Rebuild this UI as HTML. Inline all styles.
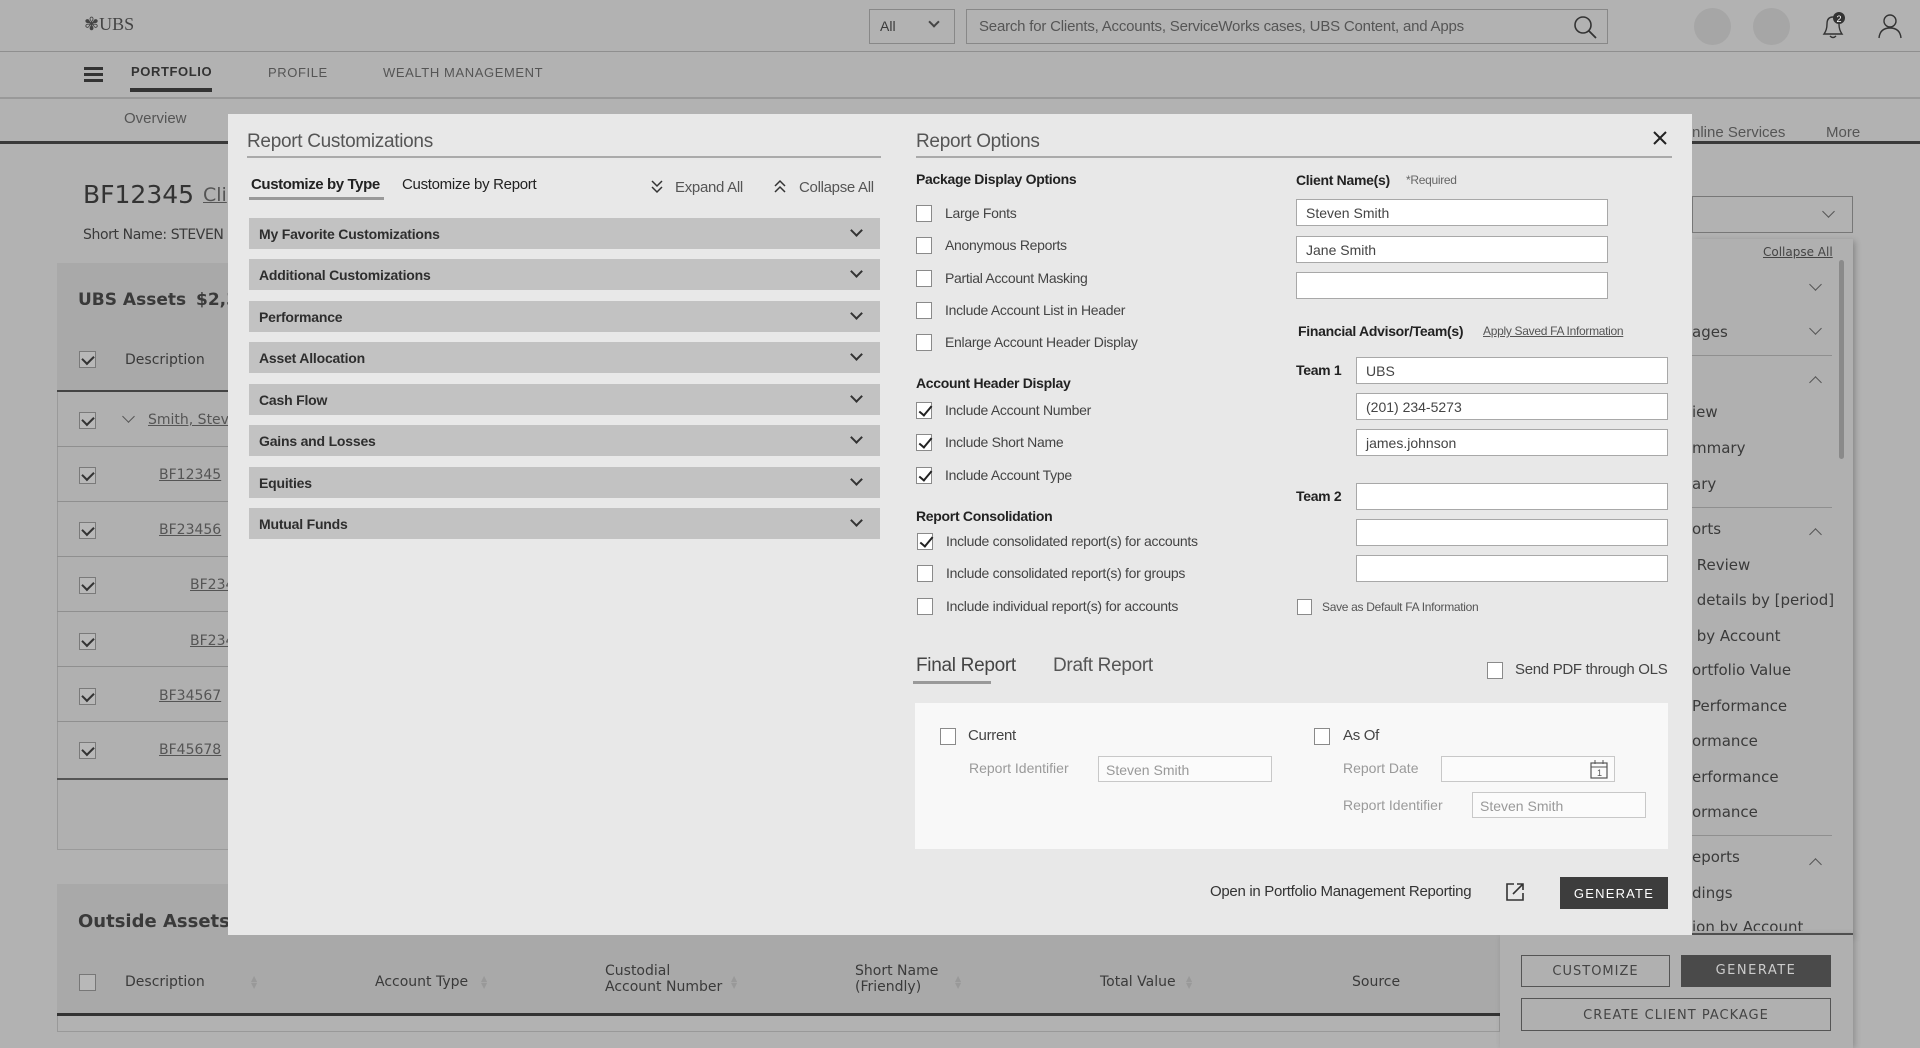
<!DOCTYPE html>
<html><head><meta charset="utf-8"><style>
*{box-sizing:border-box;margin:0;padding:0}
body{width:1920px;height:1048px;overflow:hidden;background:#b2b2b2;font-family:"DejaVu Sans","Liberation Sans",sans-serif;color:#3a3a3a;position:relative}
.a{position:absolute;white-space:nowrap}
.bg{font-family:"DejaVu Sans",sans-serif;font-size:14px;color:#3a3a3a}
.ln{position:absolute;height:1px;background:#8f8f8f}
.cbg{position:absolute;width:17px;height:17px;border:1px solid #7a7a7a;background:#b8b8b8}
.cbg:after{content:"";position:absolute;left:4px;top:1px;width:6px;height:9px;border-right:2px solid #333;border-bottom:2px solid #333;transform:rotate(45deg)}
.u{text-decoration:underline}
.m{font-family:"Liberation Sans",sans-serif;color:#333}
.acc{position:absolute;left:249px;width:631px;height:31px;background:#c2c2c2;font:bold 14px "Liberation Sans",sans-serif;letter-spacing:-.2px;color:#2e2e2e;padding:8px 10px}
.chev{position:absolute;width:9px;height:9px;border-right:2px solid #333;border-bottom:2px solid #333;transform:rotate(45deg)}
.cb{position:absolute;width:16px;height:17px;border:1px solid #8a8a8a;background:#fff}
.cb.k:after{content:"";position:absolute;left:5px;top:0px;width:5px;height:11px;border-right:2px solid #222;border-bottom:2px solid #222;transform:rotate(40deg)}
.lb{position:absolute;font:14px "Liberation Sans",sans-serif;letter-spacing:-.3px;color:#444;white-space:nowrap}
.h{position:absolute;font:bold 14px "Liberation Sans",sans-serif;letter-spacing:-.3px;color:#222;white-space:nowrap}
.in{position:absolute;height:27px;background:#fff;border:1px solid #a8a8a8;font:14px "Liberation Sans",sans-serif;color:#444;padding:5px 9px}
.gin{position:absolute;height:26px;background:#fbfbfb;border:1px solid #c8c8c8;font:14px "Liberation Sans",sans-serif;color:#999;padding:5px 7px}
.gl{position:absolute;font:14px "Liberation Sans",sans-serif;color:#9a9a9a}
.rp{font-family:"DejaVu Sans",sans-serif;font-size:15px;color:#3a3a3a;position:absolute;left:1692px;white-space:nowrap}
.rch{position:absolute;left:1811px;width:9px;height:9px;border-right:1.5px solid #555;border-bottom:1.5px solid #555}
.srt{position:absolute;font-size:8px;line-height:7px;color:#999}
</style></head><body>
<div class="a" style="left:84px;top:14px;font:18px 'Liberation Serif',serif;color:#444">✾UBS</div>
<div class="ln" style="left:0;top:51px;width:1920px"></div>
<div class="a" style="left:869px;top:9px;width:86px;height:35px;border:1px solid #888;font:14px 'Liberation Sans',sans-serif;padding:8px 10px">All</div>
<div class="chev" style="left:930px;top:18px;border-color:#444;width:8px;height:8px"></div>
<div class="a" style="left:966px;top:9px;width:642px;height:35px;border:1px solid #888;font:15px 'Liberation Sans',sans-serif;letter-spacing:-.2px;color:#555;padding:8px 12px">Search for Clients, Accounts, ServiceWorks cases, UBS Content, and Apps</div>
<svg class="a" style="left:1572px;top:14px" width="26" height="26"><circle cx="11" cy="11" r="8" fill="none" stroke="#333" stroke-width="1.6"/><line x1="17" y1="17" x2="24" y2="24" stroke="#333" stroke-width="1.8"/></svg>
<div class="a" style="left:1694px;top:8px;width:37px;height:37px;border-radius:50%;background:#a6a6a6"></div>
<div class="a" style="left:1753px;top:8px;width:37px;height:37px;border-radius:50%;background:#a6a6a6"></div>
<svg class="a" style="left:1818px;top:10px" width="30" height="32"><path d="M6 24 Q9 20 9 14 Q9 7 15 7 Q21 7 21 14 Q21 20 24 24 Z M12 26 Q15 29 18 26" fill="none" stroke="#333" stroke-width="1.4"/><circle cx="21" cy="8" r="6" fill="#333"/><text x="18.5" y="12" font-size="9" fill="#fff" font-family="Liberation Sans">2</text></svg>
<svg class="a" style="left:1876px;top:12px" width="28" height="28"><circle cx="14" cy="9" r="6" fill="none" stroke="#333" stroke-width="1.4"/><path d="M3 26 Q4 16 14 16 Q24 16 25 26" fill="none" stroke="#333" stroke-width="1.4"/></svg>
<div class="a" style="left:84px;top:67px;width:19px;height:3px;background:#333;box-shadow:0 6px 0 #333,0 12px 0 #333"></div>
<div class="a" style="left:131px;top:64px;font:bold 13px 'Liberation Sans',sans-serif;letter-spacing:.6px;color:#333">PORTFOLIO</div>
<div class="a" style="left:130px;top:88px;width:82px;height:4px;background:#333"></div>
<div class="a" style="left:268px;top:65px;font:13px 'Liberation Sans',sans-serif;letter-spacing:.6px;color:#555">PROFILE</div>
<div class="a" style="left:383px;top:65px;font:13px 'Liberation Sans',sans-serif;letter-spacing:.6px;color:#555">WEALTH MANAGEMENT</div>
<div class="ln" style="left:0;top:97px;width:1920px;height:2px;background:#999"></div>
<div class="a" style="left:124px;top:110px;font:15px 'Liberation Sans',sans-serif;color:#555">Overview</div>
<div class="a" style="left:1692px;top:124px;font:15px 'Liberation Sans',sans-serif;color:#555">nline Services</div>
<div class="a" style="left:1826px;top:124px;font:15px 'Liberation Sans',sans-serif;color:#555">More</div>
<div class="a" style="left:0;top:141px;width:1920px;height:3px;background:#3a3a3a"></div>
<div class="a" style="left:83px;top:180px;font:25px 'DejaVu Sans',sans-serif;color:#333">BF12345</div>
<div class="a u" style="left:203px;top:184px;font:19px 'DejaVu Sans',sans-serif;color:#555">Cli</div>
<div class="a bg" style="left:83px;top:227px;letter-spacing:-.4px">Short Name: STEVEN</div>
<div class="a" style="left:57px;top:263px;width:200px;height:587px;border:1px solid #9a9a9a;background:#b0b0b0"></div>
<div class="a" style="left:57px;top:263px;width:200px;height:127px;background:#a9a9a9"></div>
<div class="a bg" style="left:78px;top:290px;font-weight:bold;font-size:17px">UBS Assets</div>
<div class="a bg" style="left:196px;top:290px;font-weight:bold;font-size:17px">$2,3</div>
<div class="cbg" style="left:79px;top:351px"></div><div class="a bg" style="left:125px;top:352px">Description</div>
<div class="a" style="left:57px;top:390px;width:200px;height:2px;background:#444"></div>
<div class="cbg" style="left:79px;top:412px"></div>
<div class="a" style="left:124px;top:412px;width:9px;height:9px;border-right:1.5px solid #555;border-bottom:1.5px solid #555;transform:rotate(45deg)"></div>
<div class="a bg u" style="left:148px;top:412px;color:#555">Smith, Steve</div>
<div class="ln" style="left:57px;top:446px;width:200px"></div>
<div class="cbg" style="left:79px;top:467px"></div><div class="a bg u" style="left:159px;top:467px;color:#555">BF12345</div>
<div class="ln" style="left:57px;top:501px;width:200px"></div>
<div class="cbg" style="left:79px;top:522px"></div><div class="a bg u" style="left:159px;top:522px;color:#555">BF23456</div>
<div class="ln" style="left:57px;top:556px;width:200px"></div>
<div class="cbg" style="left:79px;top:577px"></div><div class="a bg u" style="left:190px;top:577px;color:#555">BF234</div>
<div class="ln" style="left:57px;top:611px;width:200px"></div>
<div class="cbg" style="left:79px;top:633px"></div><div class="a bg u" style="left:190px;top:633px;color:#555">BF234</div>
<div class="ln" style="left:57px;top:666px;width:200px"></div>
<div class="cbg" style="left:79px;top:688px"></div><div class="a bg u" style="left:159px;top:688px;color:#555">BF34567</div>
<div class="ln" style="left:57px;top:721px;width:200px"></div>
<div class="cbg" style="left:79px;top:742px"></div><div class="a bg u" style="left:159px;top:742px;color:#555">BF45678</div>
<div class="a" style="left:57px;top:778px;width:200px;height:2px;background:#555"></div>
<div class="a" style="left:57px;top:884px;width:1443px;height:130px;background:#a9a9a9"></div>
<div class="a bg" style="left:78px;top:911px;font-weight:bold;font-size:18px">Outside Assets</div>
<div class="a" style="left:79px;top:974px;width:17px;height:17px;border:1px solid #777;background:#b8b8b8"></div>
<div class="a bg" style="left:125px;top:974px">Description</div><div class="srt" style="left:251px;top:975px">▲<br>▼</div>
<div class="a bg" style="left:375px;top:974px">Account Type</div><div class="srt" style="left:481px;top:975px">▲<br>▼</div>
<div class="a bg" style="left:605px;top:963px;line-height:16px">Custodial<br>Account Number</div><div class="srt" style="left:731px;top:975px">▲<br>▼</div>
<div class="a bg" style="left:855px;top:963px;line-height:16px">Short Name<br>(Friendly)</div><div class="srt" style="left:955px;top:975px">▲<br>▼</div>
<div class="a bg" style="left:1100px;top:974px">Total Value</div><div class="srt" style="left:1186px;top:975px">▲<br>▼</div>
<div class="a bg" style="left:1352px;top:974px">Source</div>
<div class="a" style="left:57px;top:1013px;width:1443px;height:3px;background:#333"></div>
<div class="a" style="left:57px;top:1016px;width:1443px;height:16px;border:1px solid #999;border-top:0"></div>
<div class="a" style="left:1692px;top:196px;width:161px;height:37px;border:1px solid #777"></div>
<div class="rch" style="left:1824px;top:207px;transform:rotate(45deg)"></div>
<div class="a" style="left:1692px;top:239px;width:161px;height:696px;background:#b0b0b0;box-shadow:2px 2px 6px rgba(0,0,0,.25)"></div>
<div class="a u" style="left:1763px;top:245px;font:12px 'DejaVu Sans',sans-serif;color:#444">Collapse All</div>
<div class="a" style="left:1839px;top:260px;width:5px;height:199px;background:#8a8a8a;border-radius:3px"></div>
<div class="rch" style="top:280px;transform:rotate(45deg)"></div>
<div class="rp" style="top:323px">ages</div><div class="rch" style="top:324px;transform:rotate(45deg)"></div>
<div class="ln" style="left:1692px;top:355px;width:140px"></div>
<div class="rch" style="top:378px;transform:rotate(-135deg)"></div>
<div class="rp" style="top:403px">iew</div><div class="rp" style="top:439px">mmary</div><div class="rp" style="top:475px">ary</div>
<div class="ln" style="left:1692px;top:507px;width:140px"></div>
<div class="rp" style="top:520px">orts</div><div class="rch" style="top:530px;transform:rotate(-135deg)"></div>
<div class="rp" style="top:556px">&nbsp;Review</div><div class="rp" style="top:591px">&nbsp;details by [period]</div><div class="rp" style="top:627px">&nbsp;by Account</div><div class="rp" style="top:661px">ortfolio Value</div><div class="rp" style="top:697px">Performance</div><div class="rp" style="top:732px">ormance</div><div class="rp" style="top:768px">erformance</div><div class="rp" style="top:803px">ormance</div>
<div class="ln" style="left:1692px;top:835px;width:140px"></div>
<div class="rp" style="top:848px">eports</div><div class="rch" style="top:860px;transform:rotate(-135deg)"></div>
<div class="rp" style="top:884px">dings</div><div class="rp" style="top:918px;height:13px;overflow:hidden">ion by Account</div>
<div class="a" style="left:1500px;top:933px;width:353px;height:2px;background:#555"></div>
<div class="a" style="left:1500px;top:935px;width:353px;height:113px;background:#b0b0b0;box-shadow:2px 0 6px rgba(0,0,0,.2)"></div>
<div class="a" style="left:1521px;top:955px;width:149px;height:32px;border:1px solid #555;font:13px 'DejaVu Sans',sans-serif;letter-spacing:1px;text-align:center;padding-top:8px;color:#444">CUSTOMIZE</div>
<div class="a" style="left:1681px;top:955px;width:150px;height:32px;background:#4a4a4a;font:13px 'DejaVu Sans',sans-serif;letter-spacing:1.5px;text-align:center;padding-top:8px;color:#ccc">GENERATE</div>
<div class="a" style="left:1521px;top:998px;width:310px;height:33px;border:1px solid #555;font:13px 'DejaVu Sans',sans-serif;letter-spacing:1px;text-align:center;padding-top:9px;color:#444">CREATE CLIENT PACKAGE</div>
<div class="a" style="left:228px;top:114px;width:1464px;height:821px;background:#e8e8e8"></div>
<div class="a m" style="left:247px;top:131px;font-size:19px;letter-spacing:-.3px;color:#555">Report Customizations</div>
<div class="a" style="left:247px;top:156px;width:634px;height:2px;background:#aaa"></div>
<div class="a m" style="left:251px;top:176px;font-size:15px;font-weight:bold;letter-spacing:-.4px;color:#222">Customize by Type</div>
<div class="a" style="left:249px;top:197px;width:135px;height:3px;background:#999"></div>
<div class="a m" style="left:402px;top:176px;font-size:15px;letter-spacing:-.3px;color:#222">Customize by Report</div>
<svg class="a" style="left:650px;top:178px" width="14" height="18"><path d="M2 3 L7 8 L12 3 M2 9 L7 14 L12 9" fill="none" stroke="#333" stroke-width="1.5"/></svg>
<div class="a m" style="left:675px;top:179px;font-size:15px;letter-spacing:-.3px;color:#555">Expand All</div>
<svg class="a" style="left:773px;top:178px" width="14" height="18"><path d="M2 8 L7 3 L12 8 M2 14 L7 9 L12 14" fill="none" stroke="#333" stroke-width="1.5"/></svg>
<div class="a m" style="left:799px;top:179px;font-size:15px;letter-spacing:-.3px;color:#555">Collapse All</div>
<div class="acc" style="top:218px">My Favorite Customizations<div class="chev" style="left:603px;top:8px"></div></div>
<div class="acc" style="top:259px">Additional Customizations<div class="chev" style="left:603px;top:8px"></div></div>
<div class="acc" style="top:301px">Performance<div class="chev" style="left:603px;top:8px"></div></div>
<div class="acc" style="top:342px">Asset Allocation<div class="chev" style="left:603px;top:8px"></div></div>
<div class="acc" style="top:384px">Cash Flow<div class="chev" style="left:603px;top:8px"></div></div>
<div class="acc" style="top:425px">Gains and Losses<div class="chev" style="left:603px;top:8px"></div></div>
<div class="acc" style="top:467px">Equities<div class="chev" style="left:603px;top:8px"></div></div>
<div class="acc" style="top:508px">Mutual Funds<div class="chev" style="left:603px;top:8px"></div></div>
<div class="a m" style="left:916px;top:131px;font-size:19px;letter-spacing:-.3px;color:#555">Report Options</div>
<svg class="a" style="left:1652px;top:130px" width="16" height="16"><path d="M2 2 L14 14 M14 2 L2 14" stroke="#222" stroke-width="2"/></svg>
<div class="a" style="left:916px;top:156px;width:756px;height:2px;background:#aaa"></div>
<div class="h" style="left:916px;top:171px">Package Display Options</div>
<div class="cb" style="left:916px;top:205px"></div><div class="lb" style="left:945px;top:205px">Large Fonts</div>
<div class="cb" style="left:916px;top:237px"></div><div class="lb" style="left:945px;top:237px">Anonymous Reports</div>
<div class="cb" style="left:916px;top:270px"></div><div class="lb" style="left:945px;top:270px">Partial Account Masking</div>
<div class="cb" style="left:916px;top:302px"></div><div class="lb" style="left:945px;top:302px">Include Account List in Header</div>
<div class="cb" style="left:916px;top:334px"></div><div class="lb" style="left:945px;top:334px">Enlarge Account Header Display</div>
<div class="h" style="left:916px;top:375px">Account Header Display</div>
<div class="cb k" style="left:916px;top:402px"></div><div class="lb" style="left:945px;top:402px">Include Account Number</div>
<div class="cb k" style="left:916px;top:434px"></div><div class="lb" style="left:945px;top:434px">Include Short Name</div>
<div class="cb k" style="left:916px;top:467px"></div><div class="lb" style="left:945px;top:467px">Include Account Type</div>
<div class="h" style="left:916px;top:508px">Report Consolidation</div>
<div class="cb k" style="left:917px;top:533px"></div><div class="lb" style="left:946px;top:533px">Include consolidated report(s) for accounts</div>
<div class="cb" style="left:917px;top:565px"></div><div class="lb" style="left:946px;top:565px">Include consolidated report(s) for groups</div>
<div class="cb" style="left:917px;top:598px"></div><div class="lb" style="left:946px;top:598px">Include individual report(s) for accounts</div>
<div class="h" style="left:1296px;top:172px">Client Name(s)</div>
<div class="lb" style="left:1406px;top:173px;font-size:12px;color:#666">*Required</div>
<div class="in" style="left:1296px;top:199px;width:312px">Steven Smith</div>
<div class="in" style="left:1296px;top:236px;width:312px">Jane Smith</div>
<div class="in" style="left:1296px;top:272px;width:312px"></div>
<div class="h" style="left:1298px;top:323px">Financial Advisor/Team(s)</div>
<div class="lb u" style="left:1483px;top:324px;font-size:12px;color:#555">Apply Saved FA Information</div>
<div class="h" style="left:1296px;top:362px">Team 1</div>
<div class="in" style="left:1356px;top:357px;width:312px">UBS</div>
<div class="in" style="left:1356px;top:393px;width:312px">(201) 234-5273</div>
<div class="in" style="left:1356px;top:429px;width:312px">james.johnson</div>
<div class="h" style="left:1296px;top:488px">Team 2</div>
<div class="in" style="left:1356px;top:483px;width:312px"></div>
<div class="in" style="left:1356px;top:519px;width:312px"></div>
<div class="in" style="left:1356px;top:555px;width:312px"></div>
<div class="cb" style="left:1297px;top:599px;width:15px;height:16px"></div><div class="lb" style="left:1322px;top:600px;font-size:12px;color:#555">Save as Default FA Information</div>
<div class="a m" style="left:916px;top:655px;font-size:19px;letter-spacing:-.3px;color:#444">Final Report</div>
<div class="a" style="left:913px;top:681px;width:78px;height:3px;background:#999"></div>
<div class="a m" style="left:1053px;top:655px;font-size:19px;letter-spacing:-.3px;color:#555">Draft Report</div>
<div class="cb" style="left:1487px;top:662px"></div><div class="lb" style="left:1515px;top:661px;font-size:15px">Send PDF through OLS</div>
<div class="a" style="left:915px;top:703px;width:753px;height:146px;background:#f8f8f8"></div>
<div class="cb" style="left:940px;top:728px"></div><div class="lb" style="left:968px;top:727px;font-size:15px">Current</div>
<div class="gl" style="left:969px;top:760px">Report Identifier</div>
<div class="gin" style="left:1098px;top:756px;width:174px">Steven Smith</div>
<div class="cb" style="left:1314px;top:728px"></div><div class="lb" style="left:1343px;top:727px;font-size:15px">As Of</div>
<div class="gl" style="left:1343px;top:760px">Report Date</div>
<div class="gin" style="left:1441px;top:756px;width:174px"></div>
<svg class="a" style="left:1589px;top:759px" width="20" height="20"><rect x="2" y="4" width="16" height="15" fill="none" stroke="#555" stroke-width="1.2"/><line x1="2" y1="8" x2="18" y2="8" stroke="#555"/><line x1="6" y1="1" x2="6" y2="5" stroke="#555"/><line x1="14" y1="1" x2="14" y2="5" stroke="#555"/><text x="8" y="17" font-size="9" fill="#555" font-family="Liberation Sans">1</text></svg>
<div class="gl" style="left:1343px;top:797px">Report Identifier</div>
<div class="gin" style="left:1472px;top:792px;width:174px">Steven Smith</div>
<div class="lb" style="left:1210px;top:883px;font-size:15px;color:#333">Open in Portfolio Management Reporting</div>
<svg class="a" style="left:1504px;top:881px" width="22" height="22"><path d="M10 3 H3 V19 H19 V12" fill="none" stroke="#333" stroke-width="1.6"/><path d="M9 13 L19 3 M13 3 H19 V9" fill="none" stroke="#333" stroke-width="1.6"/></svg>
<div class="a" style="left:1560px;top:877px;width:108px;height:32px;background:#3d3d3d;color:#fff;font:13px 'Liberation Sans',sans-serif;letter-spacing:1.2px;text-align:center;padding-top:9px">GENERATE</div>
</body></html>
